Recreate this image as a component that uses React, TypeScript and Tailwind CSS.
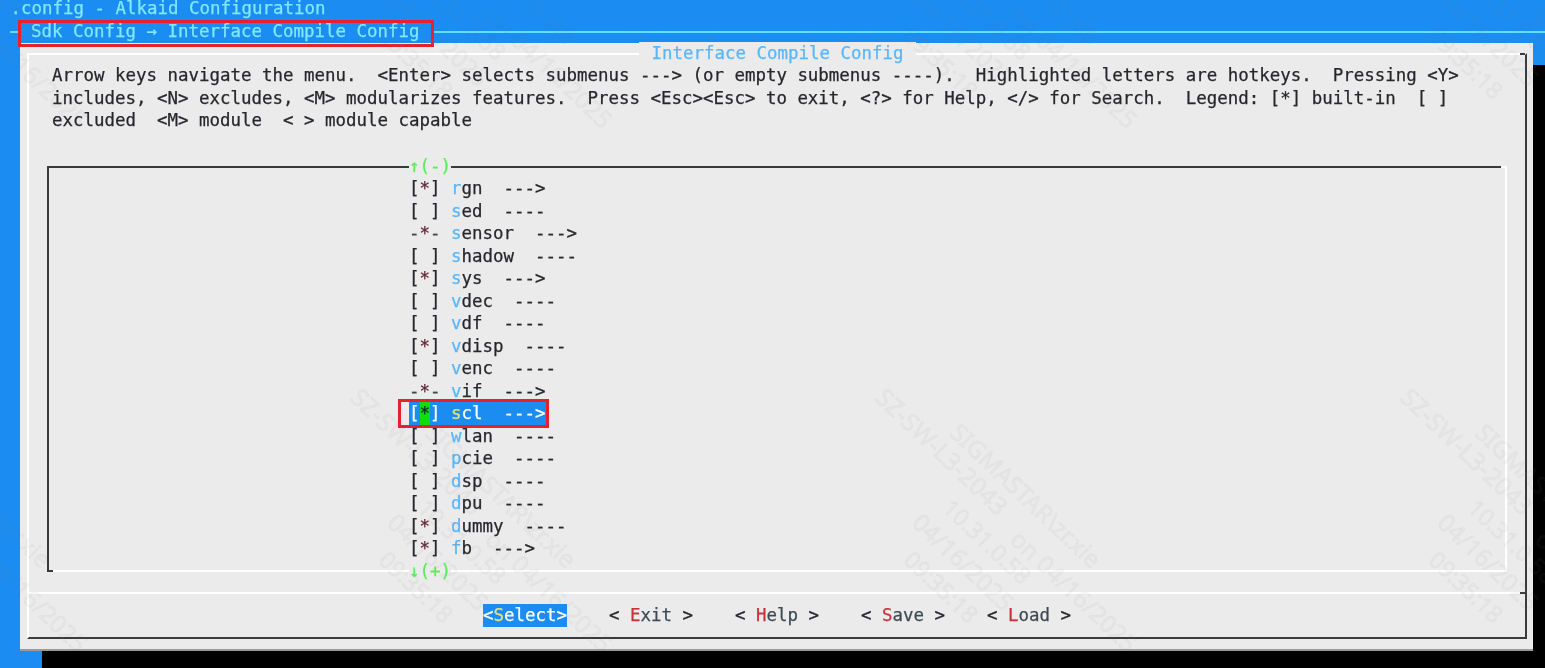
import React from "react";

const help = [
  "Arrow keys navigate the menu.  <Enter> selects submenus ---> (or empty submenus ----).  Highlighted letters are hotkeys.  Pressing <Y>",
  "includes, <N> excludes, <M> modularizes features.  Press <Esc><Esc> to exit, <?> for Help, </> for Search.  Legend: [*] built-in  [ ]",
  "excluded  <M> module  < > module capable",
];

const items: [string, string, string][] = [
  ["[*]", "rgn", "  --->"],
  ["[ ]", "sed", "  ----"],
  ["-*-", "sensor", "  --->"],
  ["[ ]", "shadow", "  ----"],
  ["[*]", "sys", "  --->"],
  ["[ ]", "vdec", "  ----"],
  ["[ ]", "vdf", "  ----"],
  ["[*]", "vdisp", "  ----"],
  ["[ ]", "venc", "  ----"],
  ["-*-", "vif", "  --->"],
  ["[*]", "scl", "  --->"],
  ["[ ]", "wlan", "  ----"],
  ["[ ]", "pcie", "  ----"],
  ["[ ]", "dsp", "  ----"],
  ["[ ]", "dpu", "  ----"],
  ["[*]", "dummy", "  ----"],
  ["[*]", "fb", "  --->"],
];

const marks: [string, number, number, number][] = [
  ["SIGMASTAR\\zr.xie", 955, 428, 24],
  ["SZ-SW-L3-2043", 880, 393, 24.5],
  ["10.31.0.58", 947, 503, 23],
  ["on 04/16/2025", 1015, 535, 24],
  ["04/16/2025", 917, 518, 24],
  ["09:35:18", 908, 555, 23],
];
const offsets: [number, number][] = [
  [-1050, 0], [-525, 0], [0, 0], [525, 0],
  [-1050, -524], [-525, -524], [0, -524], [525, -524],
];

function Mark({ k }: { k: string }) {
  const parts = k.split("");
  if (k[1] !== "*") return <span>{parts[0]} {parts[2]}</span>;
  return (
    <span className={k[0] === "-" ? "text-[#444]" : ""}>
      {parts[0]}
      <span className="text-[#5e2530]">*</span>
      {parts[2]}
    </span>
  );
}

function Row({ k, name, tail }: { k: string; name: string; tail: string }) {
  return (
    <div className="h-[22.5px] leading-[22.5px]">
      <Mark k={k} />
      {" "}
      <span className="text-[#58b6fb]">{name[0]}</span>
      {name.slice(1)}
      {tail}
    </div>
  );
}

function SelectedRow() {
  return (
    <div className="h-[22.5px] leading-[22.5px]">
      <span className="inline-block h-[22.5px] bg-[#1a8cf2] text-white">
        [<span className="bg-[#0be00b] inline-block h-[22.5px] text-[#123]">*</span>]{" "}
        <span className="text-[#e6e37a]">s</span>cl{"  "}---&gt;
      </span>
    </div>
  );
}

function Button({ hot, rest }: { hot: string; rest: string }) {
  return (
    <span>
      {"< "}
      <span className="text-[#c9303c]">{hot}</span>
      <span className="text-[#3d4a55]">{rest}</span>
      {" >"}
    </span>
  );
}

export default function App() {
  return (
    <div className="relative w-[1545px] h-[668px] overflow-hidden bg-[#1a8cf2] blur-[0.35px] whitespace-pre text-[17.44px] text-[#26262c] [-webkit-text-stroke:0.25px] font-['DejaVu_Sans_Mono',monospace]">
      <div className="h-[20px] leading-[17px] pl-[10.5px] text-[#7fe9ff]">.config - Alkaid Configuration</div>
      <div className="h-[23px] flex items-center text-[#7fe9ff] pl-[10px]">
        <div className="w-[10px] h-[2px] bg-[#5fe0ff]" />
        <span className="pl-[11px]">Sdk Config → Interface Compile Config</span>
        <div className="ml-[14px] flex-1 h-[2px] bg-[#5fe0ff]" />
      </div>

      <div className="ml-[20px] w-[1513px] h-[608px] pt-[10px] pl-[7px] bg-[#ebebeb] border-b-2 border-[#9a9a9a] shadow-[22px_22px_0_0_#000]">
        <div className="relative w-[1500px] h-[586px] border-t-2 border-l-2 border-t-white border-l-white border-r-2 border-b-2 border-r-[#3a3a3a] border-b-[#3a3a3a]">
          <div className="absolute -top-[2px] right-0 w-[5px] h-[2px] bg-[#3a3a3a]" />
          <div className="absolute -top-[13px] left-[610px] px-[2px] h-[23px] leading-[23px] bg-[#ebebeb] text-[#58b6fb]">
            {" Interface Compile Config "}
          </div>

          <div className="pt-[9px] pl-[23px]">
            {help.map((l) => (
              <div key={l} className="h-[22.5px] leading-[22.5px]">{l}</div>
            ))}
          </div>

          <div className="relative mt-[34.5px] ml-[18px] w-[1460px] h-[406px] border-t-2 border-l-2 border-t-[#3a3a3a] border-l-[#3a3a3a] border-r-2 border-b-2 border-r-white border-b-white pl-[360px]">
            <div className="absolute -top-[2px] -right-[2px] w-[6px] h-[2px] bg-white" />
            <div className="absolute -bottom-[2px] -left-[2px] w-[6px] h-[2px] bg-[#3a3a3a]" />
            <div className="-mt-[13.5px] h-[22.5px] leading-[22.5px]">
              <span className="bg-[#ebebeb] text-[#58ee58]">↑(-)</span>
            </div>
            {items.map(([k, n, t]) =>
              n === "scl" ? <SelectedRow key={n} /> : <Row key={n} k={k} name={n} tail={t} />
            )}
            <div className="h-[22.5px] leading-[22.5px]">
              <span className="bg-[#ebebeb] text-[#58ee58]">↓(+)</span>
            </div>
          </div>

          <div className="relative mt-[20px] border-t-2 border-white pt-[10px] pl-[454px] flex gap-[42px] h-[46px]">
            <div className="absolute -top-[2px] right-0 w-[5px] h-[2px] bg-[#3a3a3a]" />
            <span className="h-[23px] leading-[23px] bg-[#1a8cf2] text-white">
              {"<"}<span className="text-[#e6e37a]">S</span>elect{">"}
            </span>
            <span className="leading-[23px]"><Button hot="E" rest="xit" /></span>
            <span className="leading-[23px]"><Button hot="H" rest="elp" /></span>
            <span className="leading-[23px]"><Button hot="S" rest="ave" /></span>
            <span className="leading-[23px]"><Button hot="L" rest="oad" /></span>
          </div>
        </div>
      </div>

      <div className="absolute left-[18px] top-[20px] w-[416px] h-[27px] border-[3px] border-[#e8202e]" />
      <div className="absolute left-[398px] top-[399px] w-[151px] h-[29px] border-[3px] border-[#e8202e]" />

      <div className="absolute inset-0 pointer-events-none font-['Noto_Sans',sans-serif] text-[#8c8c8c]/5 [-webkit-text-stroke:0.7px_rgba(140,140,140,0.07)]">
        {offsets.map(([dx, dy]) =>
          marks.map(([t, x, y, s]) => (
            <span
              key={`${dx}-${dy}-${t}`}
              className="absolute leading-none origin-left rotate-[43.5deg]"
              style={{ left: x + dx, top: y + dy - s / 2, fontSize: s }}
            >
              {t}
            </span>
          ))
        )}
      </div>
    </div>
  );
}
